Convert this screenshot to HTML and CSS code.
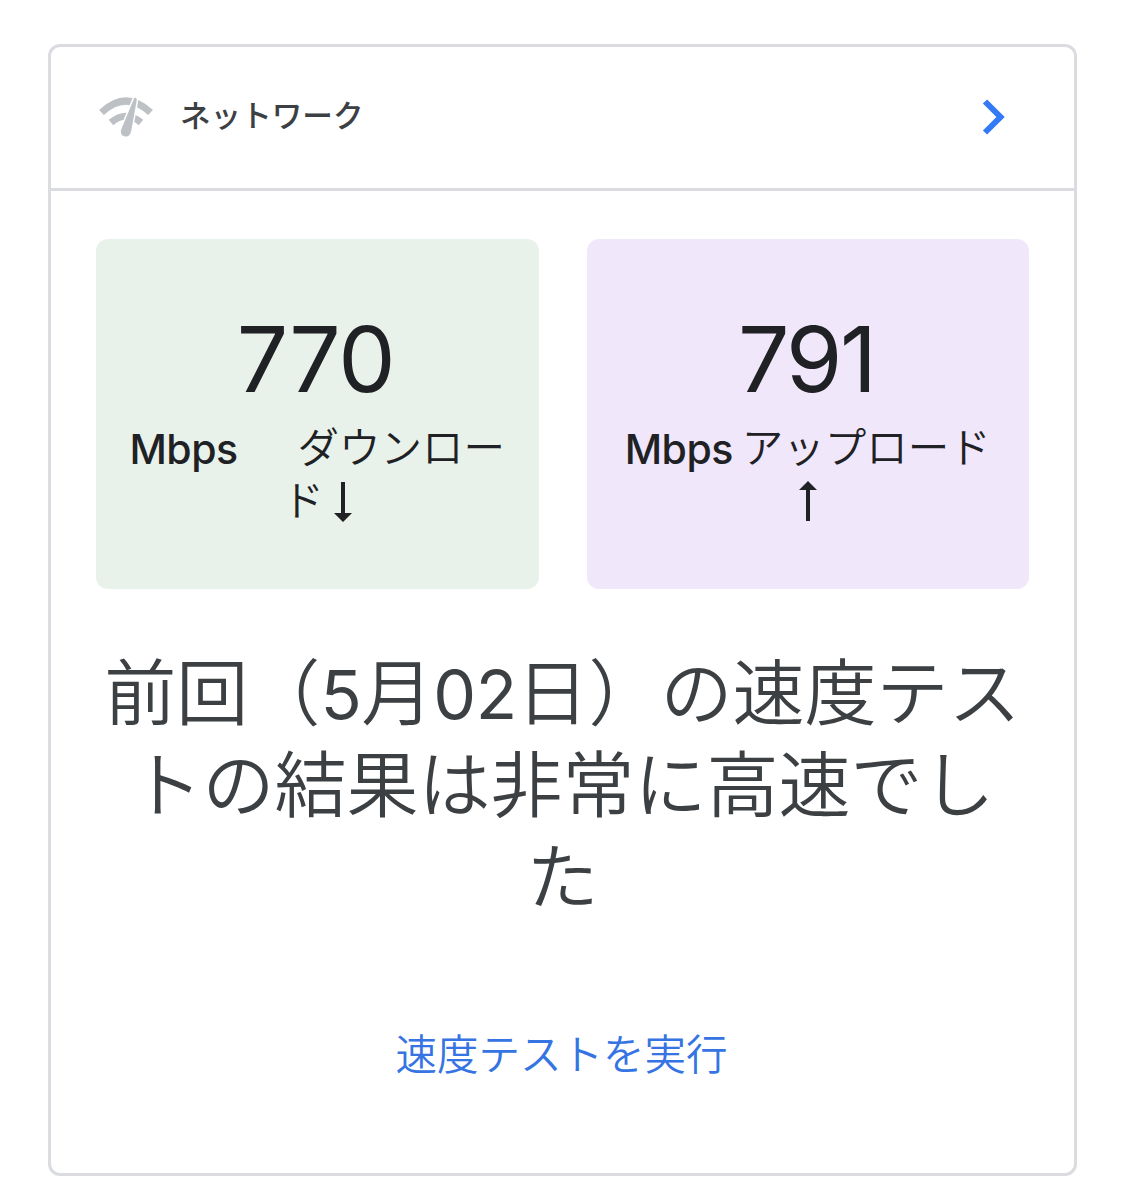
FILE: index.html
```html
<!DOCTYPE html>
<html lang="ja">

<head>
    <meta charset="UTF-8">
    <title>ネットワーク</title>
    <link rel="stylesheet" href="styles.css">
</head>

<body>
    <div class="card">
        <div class="card-header">
            <!-- Wi-Fi arcs with the gauge needle on top -->
            <svg class="network-icon" viewBox="0 0 56 42">
                <path d="M3.500 16.500 Q28 -6.500 52.500 16.500" fill="none" stroke="#bdc1c6" stroke-width="7" />
                <path d="M13 26.500 Q28 14 43 26.500" fill="none" stroke="#bdc1c6" stroke-width="7" />
                <path d="M36.200 2 Q38.500 1 38.800 4 L33.200 35 Q32 41 27 40.500 Q22 39.500 23 34 Z" fill="#bdc1c6" stroke="#fff" stroke-width="3" paint-order="stroke" />
            </svg>
            <h1>ネットワーク</h1>
            <svg class="chevron" viewBox="0 0 24 36">
                <path d="M3 2.500 L18.500 18 L3 33.500" fill="none" stroke="#347af6" stroke-width="6" />
            </svg>
        </div>

        <div class="speeds">
            <div class="speed download">
                <div class="value">770</div>
                <div class="label"><b>Mbps</b><span class="kana wide">ダウンロー</span></div>
                <div class="label"><span class="kana last">ド</span>
                    <svg class="arrow after-text" viewBox="0 0 18 40"><path d="M7 0h4v31h7l-9 9-9-9h7z" fill="#202124" /></svg>
                </div>
            </div>
            <div class="speed upload">
                <div class="value">791</div>
                <div class="label"><b>Mbps</b><span class="kana">アップロード</span></div>
                <div class="label">
                    <svg class="arrow" viewBox="0 0 18 40"><path d="M7 40h4V9h7L9 0 0 9h7z" fill="#202124" /></svg>
                </div>
            </div>
        </div>

        <p class="result">前回（<span class="num">5</span>月<span class="num">02</span>日）の速度テス<br>トの結果は非常に高速でし<br>た</p>
        <a class="run-test">速度テストを実行</a>
    </div>
</body>

</html>
```

FILE: styles.css
```css
* {
    box-sizing: border-box;
}

body {
    margin: 0;
    padding: 44px 48px 0;
    background: #fff;
    color: #202124;
    font-family: "Noto Sans CJK JP", sans-serif;
}

.card {
    width: 1029px;
    height: 1132px;
    border: 3px solid #dadce0;
    border-radius: 12px;
}

.card-header {
    display: flex;
    align-items: center;
    height: 144px;
    padding: 0 68px 2px 47px;
    border-bottom: 3px solid #dadce0;
}

.network-icon {
    width: 56px;
    height: 42px;
}

h1 {
    flex: 1;
    margin: 0 0 6px 26px;
    font-size: 30.6px;
    font-weight: 500;
    color: #3c4043;
}

.chevron {
    width: 24px;
    height: 36px;
}

.speeds {
    display: flex;
    gap: 48px;
    padding: 48px 45px 0;
}

.speed {
    flex: 1;
    height: 350px;
    padding-top: 70px;
    border-radius: 12px;
    text-align: center;
}

.download {
    background: #e8f2ea;
}

.upload {
    background: #f0e7fb;
}

.value {
    height: 111px;
    padding-right: 3px;
    font-family: Inter, sans-serif;
    font-size: 91px;
    line-height: 100px;
    letter-spacing: -1px;
}

.upload .value {
    letter-spacing: -2.5px;
}

.label {
    display: flex;
    justify-content: center;
    align-items: center;
    height: 54px;
    font-size: 41.5px;
    font-weight: 350;
    line-height: 54px;
    white-space: nowrap;
}

.label b {
    padding-top: 3px;
    font-family: Inter, sans-serif;
    font-size: 41px;
    font-weight: 500;
    letter-spacing: -0.5px;
}

.kana {
    margin-left: 9px;
    padding-bottom: 5px;
}

.kana.wide {
    margin-left: 60px;
}

.kana.last {
    margin-left: 0;
    padding-bottom: 7px;
}

.arrow {
    width: 18px;
    height: 40px;
}

.arrow.after-text {
    margin: 1px 0 0 10px;
}

.result {
    margin: 53px 0 0;
    font-size: 72px;
    font-weight: 350;
    line-height: 92px;
    text-align: center;
    color: #3c4043;
}

.num {
    font-family: Inter, sans-serif;
    font-size: 68px;
    font-weight: 400;
    line-height: 0;
    letter-spacing: -0.5px;
}

.run-test {
    display: block;
    margin-top: 104px;
    padding-right: 2px;
    font-size: 41.5px;
    font-weight: 350;
    line-height: 60px;
    text-align: center;
    color: #3574e2;
}
```
